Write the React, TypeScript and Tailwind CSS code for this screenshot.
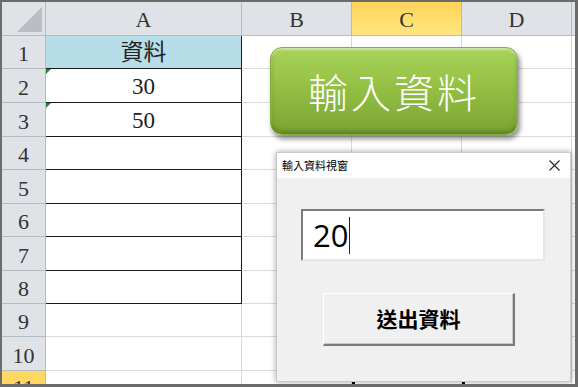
import React from "react";

const serif = { fontFamily: '"Liberation Serif", "Noto Sans CJK TC", serif' };

const rowHeights = [
  "h-[33px]",
  "h-[34px]",
  "h-[34px]",
  "h-[33px]",
  "h-[34px]",
  "h-[33px]",
  "h-[34px]",
  "h-[33px]",
  "h-[33px]",
  "h-[34px]",
  "h-[20px]",
];

function GreenTri() {
  return (
    <span className="absolute left-0 top-0 w-0 h-0 border-t-[5px] border-t-[#1e8a2a] border-r-[5px] border-r-transparent" />
  );
}

export default function App() {
  const aValues: Record<number, string> = { 1: "資料", 2: "30", 3: "50" };
  return (
    <div className="relative w-[578px] h-[387px] overflow-hidden bg-white border-t-2 border-l-2 border-r-[3px] border-b-[3px] border-[#6b6b6b]">
      {/* column headers */}
      <div className="flex h-[34px]" style={serif}>
        <div className="relative w-[44px] shrink-0 bg-[#dfe3e8] border-r border-b border-[#b6bbc1]">
          <svg className="absolute left-[15px] top-[5px]" width="26" height="26" viewBox="0 0 26 26">
            <polygon points="25,0 25,25 0,25" fill="#b8bdc3" />
          </svg>
        </div>
        <div className="w-[196px] shrink-0 bg-[#dfe3e8] border-r border-b border-[#b6bbc1] flex items-center justify-center pt-[2px] text-[22px] text-[#333]">A</div>
        <div className="w-[110px] shrink-0 bg-[#dfe3e8] border-r border-b border-[#b6bbc1] flex items-center justify-center pt-[2px] text-[22px] text-[#333]">B</div>
        <div className="w-[110px] shrink-0 bg-gradient-to-b from-[#ffd45a] to-[#ffe680] border-r border-b border-[#efb748] flex items-center justify-center pt-[2px] text-[22px] text-[#333]">C</div>
        <div className="w-[110px] shrink-0 bg-[#dfe3e8] border-r border-b border-[#b6bbc1] flex items-center justify-center pt-[2px] text-[22px] text-[#333]">D</div>
        <div className="flex-1 bg-[#dfe3e8] border-b border-[#b6bbc1]" />
      </div>

      {rowHeights.map((h, i) => {
        const r = i + 1;
        const inTable = r <= 8;
        const isLast = r === 11;
        return (
          <div key={r} className={`flex ${h}`} style={serif}>
            <div
              className={
                isLast
                  ? "w-[44px] shrink-0 bg-[#ffd862] border-r border-b border-[#efb748] flex items-start justify-center text-[22px] text-[#333] leading-[30px] pt-[2px]"
                  : "w-[44px] shrink-0 bg-[#dfe3e8] border-r border-b border-[#b6bbc1] flex items-center justify-center pt-[3px] text-[22px] text-[#333]"
              }
            >
              {r}
            </div>
            <div
              className={
                inTable
                  ? r === 1
                    ? "relative w-[196px] shrink-0 bg-[#b7dde8] border-r border-b border-[#1a1a1a] flex items-center justify-center pt-[2px] text-[23px] text-[#222]"
                    : "relative w-[196px] shrink-0 bg-white border-r border-b border-[#1a1a1a] flex items-center justify-center pt-[3px] text-[23px] text-[#222]"
                  : "relative w-[196px] shrink-0 bg-white border-r border-b border-[#dadada]"
              }
            >
              {(r === 2 || r === 3) && <GreenTri />}
              {aValues[r] ?? ""}
            </div>
            <div className="w-[110px] shrink-0 border-r border-b border-[#dadada]" />
            <div className={isLast ? "w-[110px] shrink-0 border-l-[3px] border-l-black border-r border-b border-[#dadada]" : "w-[110px] shrink-0 border-r border-b border-[#dadada]"} />
            <div className={isLast ? "w-[110px] shrink-0 border-l-[3px] border-l-black border-r border-b border-[#dadada]" : "w-[110px] shrink-0 border-r border-b border-[#dadada]"} />
            <div className="flex-1 border-b border-[#dadada]" />
          </div>
        );
      })}

      {/* green shape button */}
      <div
        className="absolute left-[268px] top-[45px] w-[248px] h-[88px] rounded-[12px] bg-gradient-to-b from-[#a9d35a] via-[#91be42] to-[#7aa333] border border-[#86ad3e] shadow-[2px_4px_5px_rgba(0,0,0,0.45),inset_0_2px_2px_rgba(255,255,255,0.45),inset_0_-3px_4px_rgba(60,90,20,0.45)] flex items-center justify-center text-white text-[40px] tracking-[3px] font-light"
        style={{ fontFamily: '"Noto Sans CJK TC", "Noto Sans", sans-serif' }}
      >
        輸入資料
      </div>

      {/* dialog */}
      <div
        className="absolute left-[274px] top-[150px] w-[295px] h-[230px] bg-[#f0f0f0] border border-[#c9c9c9] shadow-[0_0_6px_rgba(0,0,0,0.35)] flex flex-col"
        style={{ fontFamily: '"Noto Sans CJK TC", "Noto Sans", sans-serif' }}
      >
        <div className="h-[25px] bg-white flex items-center justify-between pl-[5px] pr-[10px] shrink-0">
          <span className="text-[11px] text-black">輸入資料視窗</span>
          <svg width="11" height="11" viewBox="0 0 11 11">
            <path d="M0.5 0.5 L10.5 10.5 M10.5 0.5 L0.5 10.5" stroke="#222" strokeWidth="1.1" />
          </svg>
        </div>
        <div className="flex flex-col pl-[24px] pt-[31px]">
          <div className="w-[244px] h-[52px] bg-white border-t-2 border-l-2 border-r-2 border-b-2 border-t-[#7c7c7c] border-l-[#7c7c7c] border-r-[#e6e6e6] border-b-[#e6e6e6] flex items-center pl-[10px]">
            <span className="text-[31px] text-black leading-none" style={{ fontFamily: '"Open Sans", "Noto Sans", sans-serif' }}>20</span>
            <span className="ml-[1px] w-[1px] h-[37px] bg-[#222]" />
          </div>
          <div className="ml-[22px] mt-[32px] w-[192px] h-[53px] bg-[#f0f0f0] border-t border-l border-t-white border-l-white border-r-2 border-b-2 border-r-[#7a7a7a] border-b-[#7a7a7a] shadow-[inset_-1px_-1px_0_#c8c8c8] flex items-center justify-center text-[21px] font-bold text-black">
            送出資料
          </div>
        </div>
      </div>
    </div>
  );
}
